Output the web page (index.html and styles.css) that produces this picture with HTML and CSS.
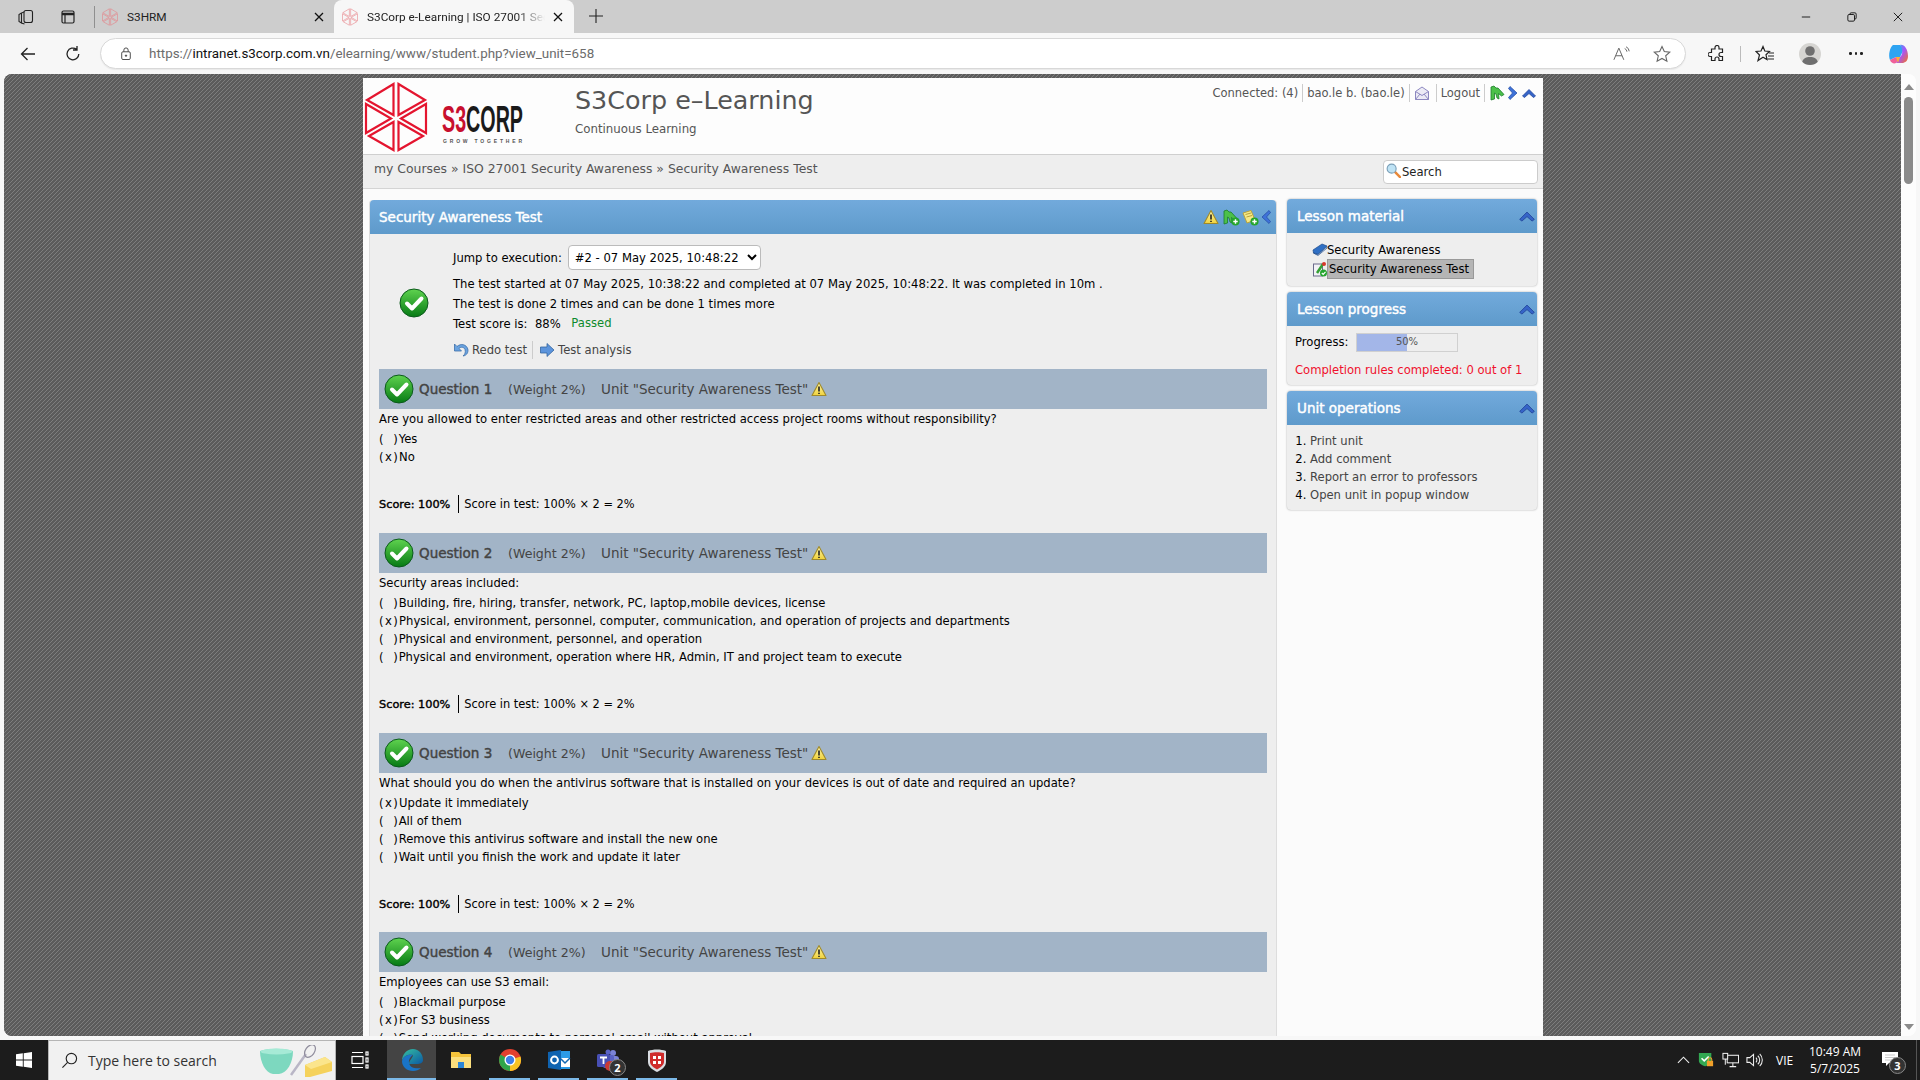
FILE: index.html
```html
<!DOCTYPE html>
<html lang="en">
<head>
<meta charset="utf-8">
<title>S3Corp e-Learning | ISO 27001 Security Awareness</title>
<link rel="stylesheet" href="styles.css">
</head>
<body>
<svg class="defs" aria-hidden="true">
  <defs>
    <linearGradient id="gGreen" x1="0" y1="0" x2="0" y2="1"><stop offset="0" stop-color="#5fd34f"/><stop offset="1" stop-color="#067a14"/></linearGradient>
    <linearGradient id="gYellow" x1="0" y1="0" x2="0" y2="1"><stop offset="0" stop-color="#fff6a8"/><stop offset="1" stop-color="#f0d23c"/></linearGradient>
    <linearGradient id="gEdge" x1="0" y1="0" x2="1" y2="1"><stop offset="0" stop-color="#35c1a0"/><stop offset="1" stop-color="#0c59a4"/></linearGradient>
    <linearGradient id="gCop" x1="0" y1="0" x2="1" y2="1"><stop offset="0" stop-color="#29b6f6"/><stop offset=".5" stop-color="#a855f7"/><stop offset="1" stop-color="#f97316"/></linearGradient>
    <symbol id="hex" viewBox="0 0 64 72">
      <g fill="none" stroke="currentColor" stroke-width="2.2" stroke-linejoin="miter">
        <path d="M29.5 3 3 19 29.5 34Z"/><path d="M34.5 3 61 19 34.5 34Z"/>
        <path d="M62 23V52L37 37.5Z"/><path d="M2 23V52L27 37.5Z"/>
        <path d="M29.5 41V69L5 55Z"/><path d="M34.5 41V69L59 55Z"/>
      </g>
    </symbol>
    <symbol id="check" viewBox="0 0 30 30">
      <circle cx="15" cy="15" r="14" fill="url(#gGreen)" stroke="#0b5a1c" stroke-width="1"/>
      <path d="M8 15.5 13 20.5 22.5 10.5" fill="none" stroke="#fff" stroke-width="4" stroke-linecap="round" stroke-linejoin="round"/>
    </symbol>
    <symbol id="warn" viewBox="0 0 16 15">
      <path d="M8 1 15 14H1Z" fill="url(#gYellow)" stroke="#a08a2a" stroke-width="1.1" stroke-linejoin="round"/>
      <path d="M8 5V10M8 11.2V12.6" stroke="#222" stroke-width="1.6"/>
    </symbol>
    <symbol id="chevUp" viewBox="0 0 16 12">
      <path d="M1.5 9 8 2.5 14.500 9 12.500 10.500 8 6.500 3.500 10.500Z" fill="#3564c8" stroke="#24479c" stroke-width=".8" stroke-linejoin="round"/>
    </symbol>
    <symbol id="chevRight" viewBox="0 0 12 16">
      <path d="M3 1.500 10 8 3 14.500 1.500 12.500 5.500 8 1.500 3.500Z" fill="#3e72d8" stroke="#2a52a8" stroke-width=".8" stroke-linejoin="round"/>
    </symbol>
    <symbol id="chevLeft" viewBox="0 0 12 16">
      <path d="M9 1.500 2 8 9 14.500 10.500 12.500 6.500 8 10.500 3.500Z" fill="#3e72d8" stroke="#2a52a8" stroke-width=".8" stroke-linejoin="round"/>
    </symbol>
    <symbol id="greenFig" viewBox="0 0 16 16">
      <path d="M2 15V2L5 1 7 3 9 3 15 9.500 12.500 11 9.500 8.500 10 14 8 13 7 9 5.500 8 5.500 14Z" fill="#4cc04a" stroke="#1d7d2c" stroke-width=".8" stroke-linejoin="round"/>
    </symbol>
    <symbol id="plus" viewBox="0 0 10 10">
      <circle cx="5" cy="5" r="4.500" fill="#25a52d"/>
      <path d="M5 2.500V7.500M2.500 5H7.500" stroke="#fff" stroke-width="1.600"/>
    </symbol>
  </defs>
</svg>

<header class="tabbar">
  <span class="tb-ic first">
    <svg width="18" height="18" viewBox="0 0 18 18" fill="none" stroke="#222" stroke-width="1.100"><rect x="7" y="2.500" width="8.500" height="12" rx="2"/><path d="M7 4 4.500 5V15L7.500 16M4.500 5 2 6.500V13.500L4.500 15"/></svg>
  </span>
  <span class="tb-ic">
    <svg width="18" height="18" viewBox="0 0 18 18" fill="none" stroke="#222" stroke-width="1.200"><rect x="3" y="3" width="12" height="12" rx="1.500"/><path d="M3 6H15" stroke-width="2.500"/><path d="M6 6V15"/></svg>
  </span>
  <span class="tab-sep"></span>
  <div class="tab">
    <svg class="fav"><use href="#hex"/></svg>
    <span class="tab-title">S3HRM</span>
    <svg class="tab-x" viewBox="0 0 10 10"><path d="M1 1 9 9M9 1 1 9"/></svg>
  </div>
  <div class="tab active">
    <svg class="fav"><use href="#hex"/></svg>
    <span class="tab-title fade">S3Corp e-Learning | ISO 27001 Security Awareness</span>
    <svg class="tab-x" viewBox="0 0 10 10"><path d="M1 1 9 9M9 1 1 9"/></svg>
  </div>
  <svg class="tab-plus" viewBox="0 0 14 14"><path d="M7 0V14M0 7H14"/></svg>
  <div class="win-btns">
    <svg class="win-ic" viewBox="0 0 12 12"><path d="M1 6H11"/></svg>
    <svg class="win-ic" viewBox="0 0 12 12"><rect x="1" y="3" width="8" height="8" rx="1.500"/><path d="M3.500 3V2.500A1.500 1.500 0 0 1 5 1H9.500A1.500 1.500 0 0 1 11 2.500V7A1.500 1.500 0 0 1 9.500 8.500H9"/></svg>
    <svg class="win-ic" viewBox="0 0 12 12"><path d="M1 1 11 11M11 1 1 11"/></svg>
  </div>
</header>

<nav class="toolbar">
  <svg class="nav-ic back" viewBox="0 0 18 18"><path d="M16 9H2.500M8.500 3 2.500 9 8.500 15"/></svg>
  <svg class="nav-ic reload" viewBox="0 0 18 18"><path d="M14.800 9A5.900 5.900 0 1 1 12.500 4.300M13 1V5H9"/></svg>
  <div class="address">
    <svg class="lock" viewBox="0 0 14 16"><rect x="2" y="6" width="10" height="9" rx="1.500"/><path d="M4.500 6V4A2.500 2.500 0 0 1 9.500 4V6"/><circle cx="7" cy="10.500" r=".8" fill="#444"/></svg>
    <span class="url"><span class="url-dim">https://</span>intranet.s3corp.com.vn<span class="url-dim">/elearning/www/student.php?view_unit=658</span></span>
    <svg class="addr-ic readaloud" viewBox="0 0 20 16"><path d="M1 15 6.500 2 12 15M3 10.500H10"/><path d="M13 2.500A4 4 0 0 1 15.500 6M14.500 0.500A6 6 0 0 1 18 5.500"/></svg>
    <svg class="addr-ic star" viewBox="0 0 18 18"><path d="M9 1.500 11.300 6.500 16.800 7.100 12.700 10.800 13.900 16.200 9 13.400 4.100 16.200 5.300 10.800 1.200 7.100 6.700 6.500Z"/></svg>
  </div>
  <svg class="tool-ic ext" viewBox="0 0 18 18"><path d="M7 2.500A2 2 0 0 1 11 2.500V4H14.500V7.500H13A2 2 0 0 0 13 11.500H14.500V15.500H11V14A2 2 0 0 0 7 14V15.500H3.500V11.500H2A2 2 0 0 1 2 7.500H3.500V4H7Z"/></svg>
  <span class="tool-sep"></span>
  <svg class="tool-ic fav-ic" viewBox="0 0 20 18"><path d="M8 1.500 9.800 6 14.500 6.500 11 9.800 12 14.500 8 12.200 3 15.500 4.500 10 1 6.500 6 6Z"/><path d="M14 8H19M13 11H19M12.500 14H19"/></svg>
  <span class="avatar"><svg viewBox="0 0 22 22"><circle cx="11" cy="8" r="4.800" fill="#6f6f6f"/><path d="M2.500 22C3 15.500 7 14 11 14S19 15.500 19.500 22Z" fill="#6f6f6f"/></svg></span>
  <span class="dots"><i></i><i></i><i></i></span>
  <svg class="copilot" viewBox="0 0 22 22">
    <path d="M6 2H13L17 6 13 14H9L3 17C1 12 3 4 6 2Z" fill="#2ea4f2"/>
    <path d="M13 2C17 1 21 6 21 13 21 18 18 20 15 20H9L13 14C16 12 16 6 13 2Z" fill="url(#gCop)"/>
    <path d="M3 17 9 14H13L9 20C7 21 4 20 3 17Z" fill="#f0609a"/>
    <path d="M9 14 13 14 11 20Z" fill="#fbb034"/>
  </svg>
</nav>

<div class="viewport">
  <div class="canvas">
    <main class="page">
      <section class="site-head">
        <svg class="logo" viewBox="0 0 165 74">
          <use href="#hex" x="0" y="1" width="64" height="72" class="logo-hex"/>
          <text x="78" y="52" class="logo-mark" textLength="81" lengthAdjust="spacingAndGlyphs"><tspan class="logo-s3">S3</tspan><tspan class="logo-corp">CORP</tspan></text>
          <text x="79" y="63" class="logo-tag" textLength="79" lengthAdjust="spacing">GROW TOGETHER</text>
        </svg>
        <div class="site-title">
          <h1>S3Corp e–Learning</h1>
          <p>Continuous Learning</p>
        </div>
        <div class="top-links">
          <span class="tl">Connected: (4)</span>
          <span class="tl">bao.le b. (bao.le)</span>
          <span class="tl mail-cell"><svg class="mail" viewBox="0 0 16 16"><path d="M1.500 6.500 8 2 14.500 6.500V14.500H1.500Z" fill="#ecebf5" stroke="#8d88c0"/><path d="M1.500 6.500 8 10.500 14.500 6.500M1.500 14.500 6 9M14.500 14.500 10 9" fill="none" stroke="#8d88c0"/></svg></span>
          <span class="tl">Logout</span>
          <span class="tl last">
            <svg class="ic16"><use href="#greenFig"/></svg>
            <svg class="ic-chev-r"><use href="#chevRight"/></svg>
            <svg class="ic-chev-u"><use href="#chevUp"/></svg>
          </span>
        </div>
      </section>

      <section class="crumbs">
        <span class="crumb-text">my Courses » ISO 27001 Security Awareness » Security Awareness Test</span>
        <div class="search">
          <svg class="search-ic" viewBox="0 0 16 16"><path d="M9.500 9.500 15 15" stroke="#e8893a" stroke-width="2.600" stroke-linecap="round"/><circle cx="6" cy="6" r="4.800" fill="#bfe3f5" stroke="#7a9fb8" stroke-width="1.200"/></svg>
          <span>Search</span>
        </div>
      </section>

      <section class="columns">
        <article class="main-panel">
          <div class="panel-head">
            <span class="panel-title">Security Awareness Test</span>
            <span class="panel-actions">
              <svg class="ic16"><use href="#warn"/></svg>
              <span class="stack"><svg class="ic16"><use href="#greenFig"/></svg><svg class="ic-plus"><use href="#plus"/></svg></span>
              <span class="stack"><svg class="ic16" viewBox="0 0 16 16"><path d="M2 4 10 1.500 14 11 6 14Z" fill="#f6e884" stroke="#b8a33c"/><path d="M4.500 5.500 10 4M5.500 8 11 6.500" stroke="#b8a33c"/></svg><svg class="ic-plus"><use href="#plus"/></svg></span>
              <svg class="ic-chev-l"><use href="#chevLeft"/></svg>
            </span>
          </div>
          <div class="panel-body">
            <div class="summary">
              <div class="summary-ic"><svg class="check-big"><use href="#check"/></svg></div>
              <div class="summary-text">
                <div class="jump">
                  <label for="jump">Jump to execution:</label>
                  <select id="jump"><option>#2 - 07 May 2025, 10:48:22</option></select>
                </div>
                <div class="sum-line">The test started at 07 May 2025, 10:38:22 and completed at 07 May 2025, 10:48:22. It was completed in 10m .</div>
                <div class="sum-line">The test is done 2 times and can be done 1 times more</div>
                <div class="sum-line">Test score is:&nbsp; 88% <span class="passed">Passed</span></div>
                <div class="sum-actions">
                  <span class="act">
                    <svg class="ic16" viewBox="0 0 16 16"><path d="M1.500 2V9H8.500L6 6.500C8 4.500 11 5 12 7.500 12.800 10 12 12.500 10 14 14 13.500 15.500 10 14.800 7 13.500 2.500 8 1 4 4.500Z" fill="#6aa3e0" stroke="#3d6ea8" stroke-width=".8" stroke-linejoin="round"/></svg>
                    Redo test
                  </span>
                  <span class="act">
                    <svg class="ic16" viewBox="0 0 16 16"><path d="M1.500 5H8V1.500L15 8 8 14.500V11H1.500Z" fill="#5c94dc" stroke="#33649e" stroke-width=".8"/></svg>
                    Test analysis
                  </span>
                </div>
              </div>
            </div>

            <div class="q-bar">
              <svg class="q-check"><use href="#check"/></svg>
              <span class="q-name">Question 1</span>
              <span class="q-weight">(Weight 2%)</span>
              <span class="q-unit">Unit "Security Awareness Test"</span>
              <svg class="ic16"><use href="#warn"/></svg>
            </div>
            <div class="q-body">
              <div class="q-text">Are you allowed to enter restricted areas and other restricted access project rooms without responsibility?</div>
              <div class="choice"><span class="mark none">(&nbsp;&nbsp;)</span>Yes</div>
              <div class="choice"><span class="mark">(x)</span>No</div>
              <div class="q-score"><b>Score: 100%</b><span class="score-sep">Score in test: 100% × 2 = 2%</span></div>
            </div>

            <div class="q-bar">
              <svg class="q-check"><use href="#check"/></svg>
              <span class="q-name">Question 2</span>
              <span class="q-weight">(Weight 2%)</span>
              <span class="q-unit">Unit "Security Awareness Test"</span>
              <svg class="ic16"><use href="#warn"/></svg>
            </div>
            <div class="q-body">
              <div class="q-text">Security areas included:</div>
              <div class="choice"><span class="mark none">(&nbsp;&nbsp;)</span>Building, fire, hiring, transfer, network, PC, laptop,mobile devices, license</div>
              <div class="choice"><span class="mark">(x)</span>Physical, environment, personnel, computer, communication, and operation of projects and departments</div>
              <div class="choice"><span class="mark none">(&nbsp;&nbsp;)</span>Physical and environment, personnel, and operation</div>
              <div class="choice"><span class="mark none">(&nbsp;&nbsp;)</span>Physical and environment, operation where HR, Admin, IT and project team to execute</div>
              <div class="q-score"><b>Score: 100%</b><span class="score-sep">Score in test: 100% × 2 = 2%</span></div>
            </div>

            <div class="q-bar">
              <svg class="q-check"><use href="#check"/></svg>
              <span class="q-name">Question 3</span>
              <span class="q-weight">(Weight 2%)</span>
              <span class="q-unit">Unit "Security Awareness Test"</span>
              <svg class="ic16"><use href="#warn"/></svg>
            </div>
            <div class="q-body tight">
              <div class="q-text">What should you do when the antivirus software that is installed on your devices is out of date and required an update?</div>
              <div class="choice"><span class="mark">(x)</span>Update it immediately</div>
              <div class="choice"><span class="mark none">(&nbsp;&nbsp;)</span>All of them</div>
              <div class="choice"><span class="mark none">(&nbsp;&nbsp;)</span>Remove this antivirus software and install the new one</div>
              <div class="choice"><span class="mark none">(&nbsp;&nbsp;)</span>Wait until you finish the work and update it later</div>
              <div class="q-score"><b>Score: 100%</b><span class="score-sep">Score in test: 100% × 2 = 2%</span></div>
            </div>

            <div class="q-bar">
              <svg class="q-check"><use href="#check"/></svg>
              <span class="q-name">Question 4</span>
              <span class="q-weight">(Weight 2%)</span>
              <span class="q-unit">Unit "Security Awareness Test"</span>
              <svg class="ic16"><use href="#warn"/></svg>
            </div>
            <div class="q-body">
              <div class="q-text">Employees can use S3 email:</div>
              <div class="choice"><span class="mark none">(&nbsp;&nbsp;)</span>Blackmail purpose</div>
              <div class="choice"><span class="mark">(x)</span>For S3 business</div>
              <div class="choice next-row"><span class="mark none">(&nbsp;&nbsp;)</span>Send working documents to personal email without approval</div>
            </div>
          </div>
        </article>

        <aside class="sidebar">
          <div class="side-panel">
            <div class="panel-head side-head"><span class="panel-title">Lesson material</span><svg class="ic-chev-side"><use href="#chevUp"/></svg></div>
            <div class="side-body material">
              <div class="mat-row">
                <svg class="ic16" viewBox="0 0 16 16"><path d="M1 8 10 2 15 4 6 12.500 1.500 11Z" fill="#2f6fc4" stroke="#1d4a8a" stroke-width=".7"/><path d="M1.500 11 6 13.500 15 6V4.500L6 12.500Z" fill="#dfe7f3" stroke="#1d4a8a" stroke-width=".7"/></svg>
                <span>Security Awareness</span>
              </div>
              <div class="mat-row">
                <svg class="ic16" viewBox="0 0 16 16"><rect x="1.500" y="3" width="9" height="12" fill="#f2f2f6" stroke="#6a6a8a"/><path d="M5 12 11 3" stroke="#35a035" stroke-width="2.500"/><circle cx="12" cy="3" r="2" fill="#d8372c"/><circle cx="11.500" cy="12" r="3.500" fill="#25a52d"/><path d="M9.800 12 11.200 13.400 13.500 10.800" fill="none" stroke="#fff" stroke-width="1.200"/></svg>
                <span class="current">Security Awareness Test</span>
              </div>
            </div>
          </div>
          <div class="side-panel">
            <div class="panel-head side-head"><span class="panel-title">Lesson progress</span><svg class="ic-chev-side"><use href="#chevUp"/></svg></div>
            <div class="side-body progress-body">
              <div class="prog-row">
                <span class="prog-label">Progress:</span>
                <div class="prog-track"><div class="prog-fill"></div><span class="prog-num">50%</span></div>
              </div>
              <div class="rules">Completion rules completed: 0 out of 1</div>
            </div>
          </div>
          <div class="side-panel">
            <div class="panel-head side-head"><span class="panel-title">Unit operations</span><svg class="ic-chev-side"><use href="#chevUp"/></svg></div>
            <ol class="ops">
              <li><span>Print unit</span></li>
              <li><span>Add comment</span></li>
              <li><span>Report an error to professors</span></li>
              <li><span>Open unit in popup window</span></li>
            </ol>
          </div>
        </aside>
      </section>
    </main>
  </div>
  <div class="scrollbar">
    <span class="sb-up"></span>
    <span class="sb-thumb"></span>
    <span class="sb-down"></span>
  </div>
</div>

<footer class="taskbar">
  <span class="win-logo"><svg viewBox="0 0 16 16"><path d="M0 2.300 6.800 1.300V7.600H0ZM7.700 1.200 16 0V7.600H7.700ZM0 8.400H6.800V14.700L0 13.700ZM7.700 8.400H16V16L7.700 14.800Z" fill="#fff"/></svg></span>
  <div class="tb-search">
    <svg class="tb-mag" viewBox="0 0 18 18"><circle cx="11" cy="7" r="5.500"/><path d="M7 11 1.500 16.500"/></svg>
    <span class="tb-placeholder">Type here to search</span>
    <svg class="tb-art" viewBox="0 0 74 32">
      <path d="M1 6C10 3 24 3 34 6 34 18 28 28 20 29H14C7 28 1 18 1 6Z" fill="#7dd8bf"/><ellipse cx="17.500" cy="6.500" rx="16" ry="3" fill="#a6ead6"/>
      <path d="M32 30 47 9" stroke="#b9b6c6" stroke-width="2.500"/><ellipse cx="51" cy="6" rx="4.500" ry="7" fill="none" stroke="#8f8c9c" stroke-width="1.200" transform="rotate(35 51 6)"/>
      <path d="M46 20 66 12 73 17V26L51 32H46Z" fill="#f5d25c"/><path d="M46 20 66 12 73 17 52 24Z" fill="#fbe58c"/>
    </svg>
  </div>
  <span class="task task-view"><svg viewBox="0 0 18 18" fill="none" stroke="#fff" stroke-width="1.200"><rect x="1" y="5.500" width="11" height="7"/><path d="M1 1.500H12M1 16.500H12"/><rect x="15" y="1" width="2" height="3"/><rect x="15" y="7" width="2" height="4"/><rect x="15" y="14" width="2" height="3"/></svg></span>
  <span class="task active-app on"><svg viewBox="0 0 24 24"><path d="M2 13C2 6 7 1 13 1 19 1 23 6 23 12 23 15 20 16 17 16H9C9 12 13 10 13 7 7 6 3 9 2 13Z" fill="url(#gEdge)"/><path d="M2 13C2 19 7 23 13 23 16 23 19 22 21 20 16 21 10 20 9 15 8.500 11 11 8.500 13 7 7 6 3 9 2 13Z" fill="#1a74c6"/></svg></span>
  <span class="task"><svg viewBox="0 0 24 24"><path d="M2 4H10L12 6H22V20H2Z" fill="#f5c33b"/><path d="M2 9H22V20H2Z" fill="#fbdf7e"/><path d="M9 20V14H15V20Z" fill="#2b86d6"/></svg></span>
  <span class="task on"><svg viewBox="0 0 24 24"><circle cx="12" cy="12" r="11" fill="#e2402f"/><path d="M12 12 22.500 8.500A11 11 0 0 1 12 23Z" fill="#f7c325"/><path d="M12 12 12 23A11 11 0 0 1 2.500 6.500Z" fill="#2fa54b"/><circle cx="12" cy="12" r="5.500" fill="#fff"/><circle cx="12" cy="12" r="4.200" fill="#3f7fe8"/></svg></span>
  <span class="task on"><svg viewBox="0 0 24 24"><rect x="9" y="3" width="14" height="18" fill="#2b9be8"/><path d="M13 10H23V19H13Z" fill="#fff"/><path d="M13 10 18 15 23 10" fill="none" stroke="#1268b3" stroke-width="1.500"/><path d="M1 4 14 2V22L1 20Z" fill="#0f63b0"/><circle cx="7.500" cy="12" r="3.400" fill="none" stroke="#fff" stroke-width="2"/></svg></span>
  <span class="task on teams"><svg viewBox="0 0 24 24"><circle cx="17" cy="5" r="3" fill="#7b83d6"/><circle cx="12" cy="4" r="2.500" fill="#5a62c4"/><rect x="13" y="8" width="10" height="11" rx="3" fill="#7b83d6"/><rect x="7" y="7" width="11" height="13" rx="2" fill="#5a62c4"/><rect x="1" y="6" width="13" height="13" rx="1.500" fill="#4850b5"/><path d="M4 9.500H11M7.500 9.500V16" stroke="#fff" stroke-width="1.800"/><circle cx="14" cy="18" r="5" fill="#cc3a32"/></svg><span class="t-badge">2</span></span>
  <span class="task on"><svg viewBox="0 0 24 24"><path d="M3 3C8 1 16 1 21 3V14C21 19 16 22 12 24 8 22 3 19 3 14Z" fill="#d9dde2"/><path d="M5 5C9 4 15 4 19 5V14C19 17 15 20 12 21.500 9 20 5 17 5 14Z" fill="#cf2a2a"/><path d="M8 8H11V11H8ZM13 8H16V11H13ZM8 13H11V16H8ZM13 13H16V16H13Z" fill="#fff"/></svg></span>

  <div class="tray">
    <svg class="tr-chev" viewBox="0 0 14 8"><path d="M1 7 7 1 13 7"/></svg>
    <span class="tr-shield"><svg viewBox="0 0 18 18"><path d="M1 1H15V10C15 13 11 15 8 16 5 15 1 13 1 10Z" fill="#32a852"/><path d="M4 7 7 10 12 5" fill="none" stroke="#fff" stroke-width="1.800"/><rect x="10" y="10" width="7" height="6" fill="#f0a02a"/><path d="M11.500 10V8.500A2 2 0 0 1 15.500 8.500V10" fill="none" stroke="#f0a02a" stroke-width="1.200"/></svg></span>
    <svg class="tr-net" viewBox="0 0 18 16"><rect x="5.500" y="3" width="12" height="8"/><rect x="1" y="1" width="5" height="6" fill="#1c1c1c"/><path d="M3.500 7V13M11.500 11V15M8 15H15"/></svg>
    <svg class="tr-vol" viewBox="0 0 18 16"><path d="M1 5.500H4L8 2V14L4 10.500H1Z"/><path d="M10.500 5.500A3.500 3.500 0 0 1 10.500 10.500M12.500 3.500A6 6 0 0 1 12.500 12.500M14.500 1.500A9 9 0 0 1 14.500 14.500"/></svg>
    <span class="tr-lang">VIE</span>
    <div class="clock"><span>10:49 AM</span><span>5/7/2025</span></div>
    <span class="notif"><svg viewBox="0 0 16 16"><path d="M0 1H16V12H7L4 15V12H0Z" fill="#fff"/><path d="M3 4H13M3 6.500H13M3 9H10" stroke="#bbb" stroke-width=".8"/></svg><span class="n-badge">3</span></span>
    <span class="show-desktop"></span>
  </div>
</footer>
</body>
</html>
```

FILE: styles.css
```css
* { box-sizing: border-box; }
html, body { height: 100%; }
body {
  margin: 0;
  height: 1080px;
  overflow: hidden;
  display: flex;
  flex-direction: column;
  background: #f7f7f7;
  font-family: Roboto, "Noto Sans", sans-serif;
  color: #111;
}
.defs { display: block; width: 0; height: 0; overflow: hidden; }

/* tab strip */
.tabbar { height: 33px; flex: none; display: flex; align-items: stretch; background: #cdcdcd; }
.tb-ic { width: 42px; display: flex; align-items: center; justify-content: center; }
.tb-ic.first { margin-left: 5px; }
.tab-sep { width: 1px; height: 22px; margin: 6px 2px 0 5px; background: #8f8f8f; }
.tab { width: 237px; display: flex; align-items: center; padding: 0 10px 0 5px; font-size: 11.800px; color: #222; }
.tab.active { width: 240px; background: #f7f7f7; border-radius: 8px 8px 0 0; padding: 0 11px 0 8px; }
.fav { width: 16px; height: 18px; color: #e77d83; flex: none; margin-right: 9px; }
.tab-title { flex: 1; white-space: nowrap; overflow: hidden; }
.tab-title.fade { mask-image: linear-gradient(90deg, #000 84%, transparent 100%); -webkit-mask-image: linear-gradient(90deg, #000 84%, transparent 100%); }
.tab-x { width: 10px; height: 10px; flex: none; fill: none; stroke: #111; stroke-width: 1.300; margin-left: 8px; }
.tab-plus { width: 14px; height: 14px; margin: 9px 0 0 15px; fill: none; stroke: #222; stroke-width: 1.100; }
.win-btns { margin-left: auto; display: flex; align-items: center; gap: 36px; padding-right: 17px; }
.win-ic { width: 10px; height: 10px; fill: none; stroke: #111; stroke-width: 1.100; }

/* toolbar */
.toolbar { height: 41px; flex: none; display: flex; align-items: center; background: #f7f7f7; }
.nav-ic { width: 18px; height: 18px; fill: none; stroke: #222; stroke-width: 1.300; flex: none; }
.nav-ic.back { margin-left: 19px; }
.nav-ic.reload { margin-left: 27px; }
.address { width: 1586px; height: 31px; margin-left: 18px; display: flex; align-items: center; background: #fff; border: 1px solid #d8d8d8; border-radius: 16px; padding: 0 14px 0 19px; box-shadow: 0 1px 1px rgba(0,0,0,.06); }
.lock { width: 12px; height: 15px; fill: none; stroke: #444; stroke-width: 1.100; flex: none; }
.url { margin-left: 17px; font-size: 13.400px; color: #111; flex: 1; white-space: nowrap; }
.url-dim { color: #6c6c6c; }
.addr-ic { fill: none; stroke: #666; stroke-width: 1.100; flex: none; }
.readaloud { width: 18px; height: 15px; }
.star { width: 18px; height: 18px; margin-left: 22px; }
.tool-ic { fill: none; stroke: #222; stroke-width: 1.200; flex: none; }
.ext { width: 18px; height: 18px; margin-left: 22px; }
.tool-sep { width: 1px; height: 16px; background: #bbb; margin-left: 14px; flex: none; }
.fav-ic { width: 20px; height: 18px; margin-left: 14px; }
.avatar { width: 22px; height: 22px; border-radius: 50%; background: #d6d5d2; margin-left: 24px; overflow: hidden; flex: none; display: block; }
.avatar svg { display: block; width: 22px; height: 22px; }
.dots { display: flex; gap: 3px; margin-left: 28px; flex: none; }
.dots i { width: 2.500px; height: 2.500px; border-radius: 50%; background: #222; display: block; }
.copilot { width: 22px; height: 22px; margin-left: 24px; flex: none; }

/* viewport */
.viewport { height: 962px; flex: none; margin: 0 4px 4px 4px; display: flex; border-radius: 8px; overflow: hidden; background: #fdfdfd; }
.canvas { flex: 1; min-width: 0; overflow: hidden; padding-top: 4px; background-color: #666; background-image: repeating-linear-gradient(135deg, #5c5c5c 0 1.900px, #7e7e7e 1.900px 2.8284px); }
.scrollbar { width: 15px; flex: none; display: flex; flex-direction: column; align-items: center; padding-top: 10px; background: #fdfdfd; }
.sb-up { width: 0; height: 0; border-left: 5px solid transparent; border-right: 5px solid transparent; border-bottom: 6px solid #8b8b8b; }
.sb-thumb { width: 9px; height: 87px; margin-top: 7px; border-radius: 5px; background: #8b8b8b; }
.sb-down { width: 0; height: 0; margin-top: auto; margin-bottom: 6px; border-left: 5px solid transparent; border-right: 5px solid transparent; border-top: 6px solid #8b8b8b; }

/* page */
.page { width: 1180px; margin-left: 359px; height: 1200px; background: #fbfbfb; font-family: "DejaVu Sans", sans-serif; font-size: 11.600px; color: #000; }
.site-head { height: 77px; display: flex; align-items: flex-start; border-bottom: 1px solid #cfcfcf; background: #fdfdfd; }
.logo { width: 165px; height: 74px; flex: none; margin: 2px 0 0 1px; }
.logo-hex { color: #e4152f; }
.logo-mark { font-family: "Liberation Sans", sans-serif; font-weight: 700; font-size: 36px; }
.logo-s3 { fill: #c8102e; }
.logo-corp { fill: #1a1a1a; }
.logo-tag { font-family: "Liberation Sans", sans-serif; font-size: 5px; font-weight: 700; fill: #555; }
.site-title { margin-left: 46px; color: #555; }
.site-title h1 { margin: 7px 0 0; font-size: 25.400px; line-height: 30px; font-weight: 400; }
.site-title p { margin: 7px 0 0; font-size: 11.800px; line-height: 14px; color: #555; }
.top-links { margin-left: auto; display: flex; align-items: center; margin-top: 6px; padding-right: 6px; color: #555; font-size: 11.500px; }
.tl { height: 18px; display: flex; align-items: center; padding: 0 4px; border-right: 1px solid #ccc; }
.tl.mail-cell { padding: 0 6px 0 4px; }
.tl.last { border-right: 0; padding: 0 0 0 4px; gap: 2px; }
.mail { width: 16px; height: 16px; }
.ic16 { width: 16px; height: 16px; flex: none; }
.ic-chev-r { width: 12px; height: 16px; }
.ic-chev-u { width: 16px; height: 12px; }
.ic-chev-l { width: 12px; height: 16px; }

.crumbs { height: 34px; display: flex; align-items: flex-start; justify-content: space-between; padding: 5px 5px 0 11px; border-bottom: 1px solid #d4d4d4; background: #eee; color: #555; }
.crumb-text { line-height: 18px; font-size: 12.400px; }
.search { width: 155px; height: 24px; display: flex; align-items: center; background: #fff; border: 1px solid #ccc; border-radius: 4px; padding-left: 2px; color: #222; }
.search-ic { width: 15px; height: 15px; margin: -4px 1px 0 0; }

.columns { display: flex; align-items: flex-start; padding: 11px 6px 0 6px; gap: 10px; }
.main-panel { width: 908px; flex: none; background: #eee; border: 1px solid #ddd; border-top: 0; border-radius: 4px 4px 0 0; }
.panel-head { height: 34px; display: flex; align-items: center; justify-content: space-between; padding: 0 4px 0 9px; background: linear-gradient(#72aadc, #5e9acb); border-radius: 4px 4px 0 0; }
.panel-title { font-size: 13.500px; font-weight: 400; color: #fff; -webkit-text-stroke: .45px #fff; }
.panel-actions { display: flex; align-items: center; gap: 3px; }
.stack { display: block; width: 16px; height: 16px; position: relative; }
.stack .ic16 { display: block; }
.ic-plus { width: 9px; height: 9px; position: absolute; right: -2px; bottom: -1px; }
.panel-body { padding: 0 9px; }

.summary { display: flex; }
.summary-ic { width: 74px; flex: none; display: flex; align-items: center; padding: 12px 0 0 20px; }
.check-big { width: 30px; height: 30px; }
.summary-text { flex: 1; padding-top: 11px; }
.jump { display: flex; align-items: center; gap: 6px; height: 25px; }
.jump select { width: 193px; height: 25px; font: inherit; font-size: 11.600px; color: #000; background: #fff; border: 1px solid #bbb; border-radius: 4px; padding: 0 2px; }
.sum-line { line-height: 20px; }
.jump + .sum-line { margin-top: 4px; }
.passed { color: #0e8a2c; margin-left: 7px; position: relative; top: -1px; }
.sum-actions { display: flex; align-items: center; margin-top: 7px; height: 18px; color: #444; }
.act { display: flex; align-items: center; gap: 3px; padding-right: 5px; margin-right: 6px; border-right: 1px solid #ccc; height: 18px; }
.act:last-child { border-right: 0; }

.q-bar { height: 40px; margin-top: 10px; display: flex; align-items: center; padding-left: 5px; background: #a2b4c7; color: #444; }
.q-body + .q-bar { margin-top: 0; }
.q-check { width: 30px; height: 30px; flex: none; }
.q-name { margin-left: 5px; font-size: 13.500px; width: 89px; -webkit-text-stroke: .45px #444; }
.q-weight { width: 93px; font-size: 12.600px; }
.q-unit { margin-right: 3px; font-size: 13.500px; }
.q-body { padding: 1px 0 20px; }
.q-body.tight { padding-bottom: 19px; }
.q-text { line-height: 18px; }
.choice { line-height: 18px; }
.q-text + .choice { margin-top: 2px; }
.mark { letter-spacing: 1.400px; }
.mark.none { letter-spacing: .800px; }
.q-score { margin-top: 29px; display: flex; align-items: center; height: 18px; }
.q-score b { font-weight: 400; -webkit-text-stroke: .4px #000; font-size: 11.300px; }
.score-sep { margin-left: 8px; padding-left: 5px; border-left: 1px solid #000; line-height: 18px; font-size: 11.400px; }

.sidebar { width: 250px; flex: none; display: flex; flex-direction: column; gap: 6px; margin-top: -1px; }
.side-panel { background: #eee; border-radius: 4px; box-shadow: 0 0 2px rgba(0,0,0,.35); }
.side-head { padding-right: 1px; padding-left: 10px; }
.ic-chev-side { width: 18px; height: 14px; }
.material { height: 53px; padding: 7px 0 0 25px; }
.mat-row { height: 19.500px; display: flex; align-items: center; }
.mat-row .ic16 { margin-right: -1px; }
.current { background: #b5b5b5; border: 1px solid #999; padding: 0 4px 0 1px; line-height: 18px; }
.progress-body { height: 59px; padding: 7px 8px 0; }
.prog-row { display: flex; align-items: center; height: 19px; }
.prog-label { width: 61px; flex: none; margin-top: -2px; }
.prog-track { width: 102px; height: 19px; border: 1px solid #d0d0d0; position: relative; text-align: center; font-size: 10px; line-height: 15px; color: #555; }
.prog-fill { position: absolute; left: 0; top: 0; bottom: 0; width: 50%; background: #a3b6e8; }
.prog-num { position: relative; }
.rules { margin-top: 9px; color: #f0102c; line-height: 18px; }
.ops { margin: 0; padding: 7px 8px 6px 23px; height: 85px; color: #000; }
.ops li { line-height: 18px; }
.ops span { color: #444; }

/* taskbar */
.taskbar { height: 40px; flex: none; display: flex; align-items: stretch; background: #1c1c1c; }
.win-logo { width: 48px; display: flex; align-items: center; justify-content: center; }
.win-logo svg { width: 16px; height: 16px; }
.tb-search { width: 288px; display: flex; align-items: center; background: #f1f1f1; border: 1px solid #b5b5b5; border-bottom: 0; padding-left: 12px; font-family: "Open Sans", sans-serif; }
.tb-mag { width: 17px; height: 17px; fill: none; stroke: #222; stroke-width: 1.200; flex: none; }
.tb-placeholder { margin-left: 10px; font-size: 14px; color: #333; white-space: nowrap; flex: 1; }
.tb-art { width: 74px; height: 32px; flex: none; margin-right: 2px; }
.task { width: 49px; display: flex; align-items: center; justify-content: center; position: relative; }
.task svg { width: 24px; height: 24px; }
.task.on::after { content: ""; position: absolute; left: 4px; right: 4px; bottom: 0; height: 2px; background: #7cb9e8; }
.task-view { width: 51px; padding-right: 3px; }
.task-view svg { width: 18px; height: 18px; }
.active-app { background: #444; }
.active-app.on::after { left: 0; right: 0; }
.t-badge { position: absolute; left: 26px; top: 19px; width: 17px; height: 17px; border-radius: 50%; background: #333; border: 1px solid #888; color: #fff; font-size: 11px; line-height: 15px; text-align: center; font-family: "Open Sans", sans-serif; font-weight: 700; }
.tray { margin-left: auto; display: flex; align-items: center; color: #fff; font-family: "Open Sans", sans-serif; }
.tr-chev { width: 13px; height: 8px; fill: none; stroke: #eee; stroke-width: 1.200; }
.tr-shield { width: 16px; height: 16px; margin-left: 8px; display: block; }
.tr-shield svg { display: block; width: 16px; height: 16px; }
.tr-net { width: 17px; height: 16px; margin-left: 8px; fill: none; stroke: #eee; stroke-width: 1.100; }
.tr-vol { width: 17px; height: 16px; margin-left: 7px; fill: none; stroke: #eee; stroke-width: 1.100; }
.tr-lang { margin-left: 13px; font-size: 12px; width: 24px; }
.clock { width: 70px; display: flex; flex-direction: column; align-items: center; font-size: 12px; line-height: 17px; }
.notif { width: 18px; height: 18px; margin-left: 12px; position: relative; display: block; }
.notif svg { width: 16px; height: 16px; display: block; }
.n-badge { position: absolute; left: 7px; top: 6px; width: 17px; height: 17px; border-radius: 50%; background: #333; border: 1px solid #888; font-size: 11px; line-height: 15px; text-align: center; font-weight: 700; }
.show-desktop { width: 1px; height: 40px; background: #555; margin-left: 16px; margin-right: 3px; }
```
